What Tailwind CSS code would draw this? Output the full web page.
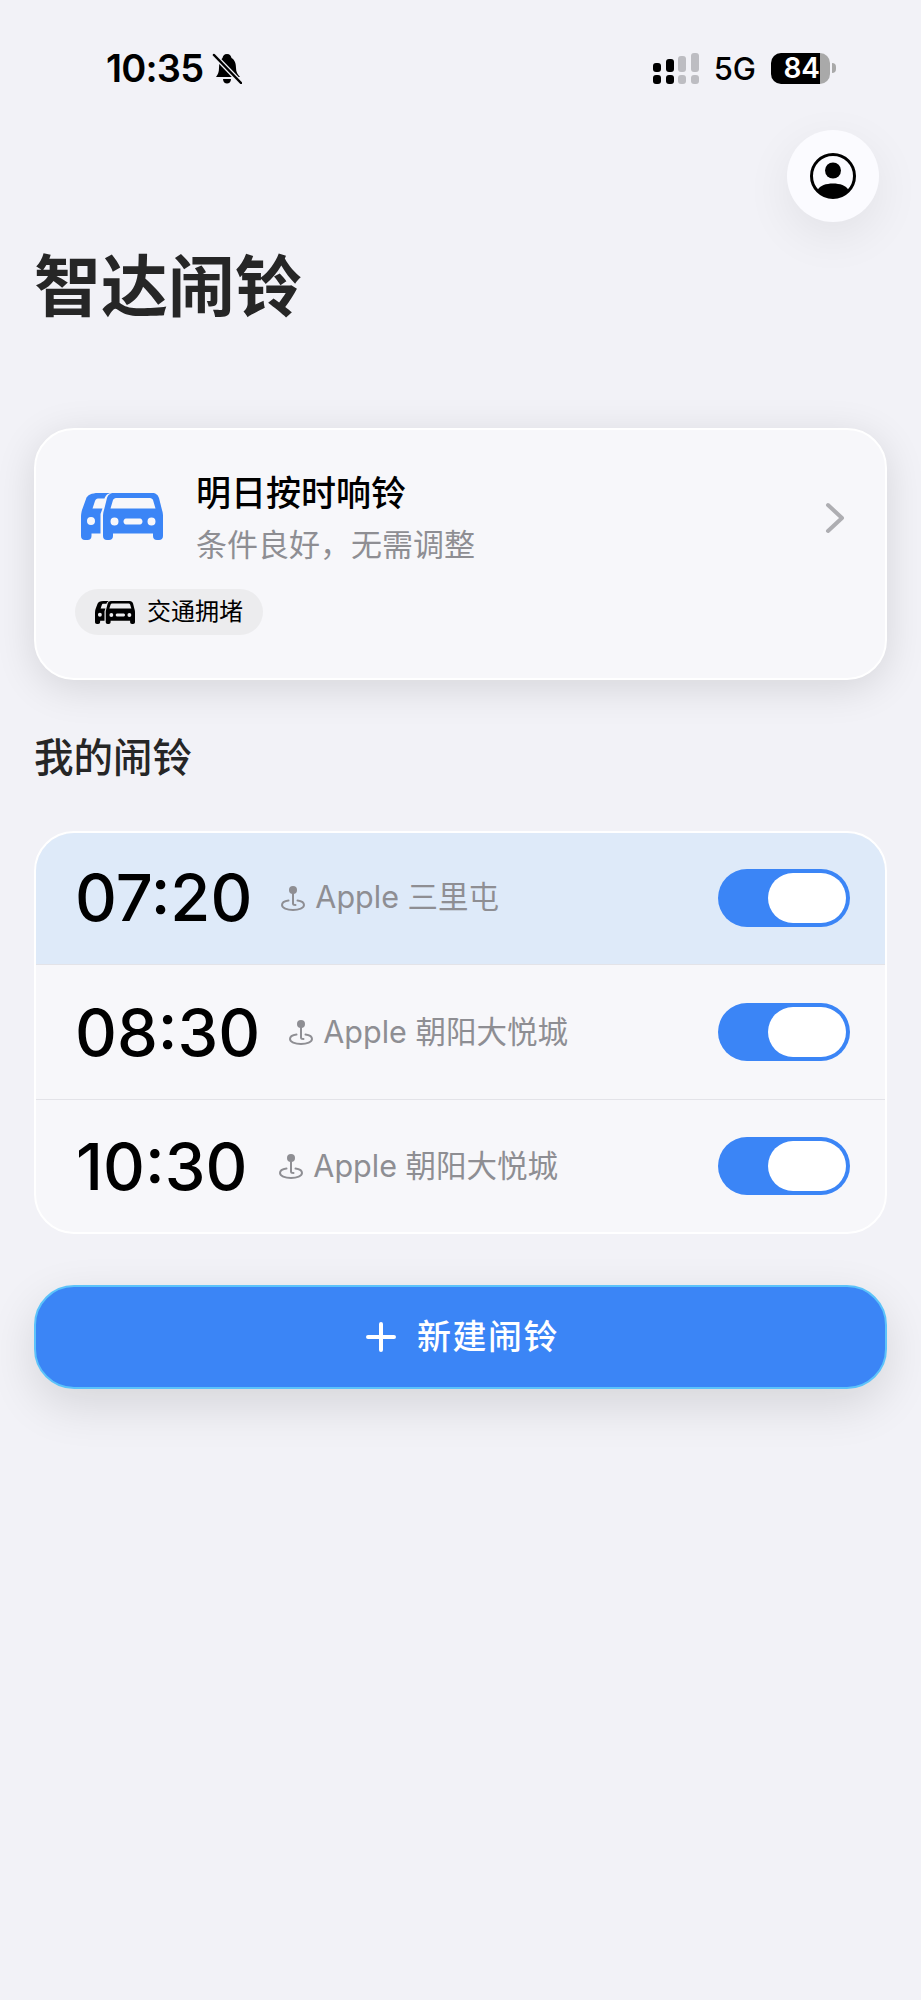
<!DOCTYPE html>
<html lang="zh-CN">
<head>
  <meta charset="UTF-8" />
  <meta name="viewport" content="width=device-width, initial-scale=1.0" />
  <title>智达闹铃</title>
  <script src="https://cdn.jsdelivr.net/npm/@tailwindcss/browser@4"></script>
</head>
<body class="min-h-[2000px] bg-[#f2f2f7] font-['Inter','Noto_Sans_CJK_SC',sans-serif] text-black overflow-x-hidden">

  <svg width="0" height="0" class="absolute">
    <symbol id="cars" viewBox="0 0 82 47">
      <path fill="currentColor" fill-rule="evenodd" d="M33 0H71C75 0 77 2 78 5L81 17C82 20 82 22 82 24V43C82 45.5 80.5 47 78 47H76C73.5 47 72 45.5 72 43V40.5H32V43C32 45.5 30.5 47 28 47H26C23.5 47 22 45.5 22 43V24C22 22 22 20 23 17L26 5C27 2 29 0 33 0ZM35 5C33.5 5 32.5 6 32 7L29.500 15.500H74.500L72 7C71.500 6 70.500 5 69 5ZM33.500 24.500A4 4 0 1 0 33.510 32.500A4 4 0 1 0 33.500 24.500ZM70.500 24.500A4 4 0 1 0 70.510 32.500A4 4 0 1 0 70.500 24.500ZM45 25.500C43.500 25.500 42.500 27 42.500 28.500C42.500 30 43.500 31.500 45 31.500H59C60.500 31.500 61.500 30 61.500 28.500C61.500 27 60.500 25.500 59 25.500Z"/>
      <path fill="currentColor" fill-rule="evenodd" d="M17 0H30C26 .5 24.500 3 23.500 5.500H17C15.500 5.500 14.500 6.500 14 8L11.500 15.500H21.500L19.500 21V40.500H10.500V43C10.500 45.500 9 47 6.500 47H4C1.500 47 0 45.500 0 43V24C0 21 .5 19 1 17L5 6C6 2 11 0 17 0ZM10 24A4 4 0 1 0 10.010 32A4 4 0 1 0 10 24Z"/>
    </symbol>
    <symbol id="pin" viewBox="0 0 24 26">
      <circle cx="12" cy="5" r="4" fill="currentColor"/>
      <path fill="none" stroke="currentColor" stroke-width="2" stroke-linecap="round" d="M12 8V18.500C12 19.500 13 20 14.500 20M7.500 15.500C3.500 16 1 17.500 1 20C1 23 6 25 12 25C18 25 23 23 23 20C23 17.500 20.500 16 16.500 15.500"/>
    </symbol>
  </svg>

  <!-- status bar -->
  <div class="flex items-center justify-between h-[130px] pl-[106px] pr-[85px]">
    <div class="flex items-center gap-[9px] mt-[6px]">
      <span class="text-[38px] leading-none font-semibold tracking-[-0.8px]">10:35</span>
      <svg class="w-[30px] h-[31px]" viewBox="0 0 30 31">
        <path fill="#000" d="M15 1C18 1 19 3 19.500 5C23 7 24 11 24 15C24 19 25.500 21 28 24H4C6 21.500 7 19 7 15C7 11 8 7 10.500 5C11 3 12 1 15 1ZM11 26H19C19 29 17 30.500 15 30.500C13 30.500 11 29 11 26Z"/>
        <path stroke="#f2f2f7" stroke-width="5" d="M1 1L29 30"/>
        <path stroke="#000" stroke-width="2.500" stroke-linecap="round" d="M2 2L29 30"/>
      </svg>
    </div>
    <div class="flex items-center mt-[6px]">
      <div class="flex items-end gap-[4.500px] mr-[15px]">
        <div class="flex flex-col gap-[3px]"><div class="w-[8px] h-[9px] rounded-[3px] bg-black"></div><div class="w-[8px] h-[9px] rounded-[3px] bg-black"></div></div>
        <div class="flex flex-col gap-[3px]"><div class="w-[8px] h-[13px] rounded-[3px] bg-black"></div><div class="w-[8px] h-[9px] rounded-[3px] bg-black"></div></div>
        <div class="flex flex-col gap-[3px]"><div class="w-[8px] h-[16px] rounded-[3px] bg-[#bdbdc2]"></div><div class="w-[8px] h-[9px] rounded-[3px] bg-[#bdbdc2]"></div></div>
        <div class="flex flex-col gap-[3px]"><div class="w-[8px] h-[19px] rounded-[3px] bg-[#bdbdc2]"></div><div class="w-[8px] h-[9px] rounded-[3px] bg-[#bdbdc2]"></div></div>
      </div>
      <span class="text-[31px] leading-none font-medium mr-[15px]">5G</span>
      <div class="flex items-center">
        <div class="flex h-[31px] w-[59px]">
          <div class="flex items-center justify-end w-[49px] rounded-l-[10px] bg-black text-white text-[28px] leading-none font-semibold whitespace-nowrap">84</div>
          <div class="w-[10px] rounded-r-[10px] bg-[#a9a9a9]"></div>
        </div>
        <div class="w-[4px] h-[10px] ml-[2px] rounded-r-full bg-[#a9a9a9]"></div>
      </div>
    </div>
  </div>

  <!-- avatar -->
  <div class="flex justify-end pr-[42px]">
    <button class="flex items-center justify-center w-[92px] h-[92px] rounded-full bg-[#fbfbff] shadow-[0_14px_48px_rgba(0,0,0,0.07)]">
      <svg class="w-[46px] h-[46px]" viewBox="0 0 46 46">
        <circle cx="23" cy="23" r="21.500" fill="none" stroke="#000" stroke-width="3"/>
        <circle cx="23" cy="17.500" r="8" fill="#000"/>
        <path fill="#000" d="M7.500 37C10 32.500 16 30.500 23 30.500C30 30.500 36 32.500 38.500 37C34.500 41.500 29 44 23 44C17 44 11.500 41.500 7.500 37Z"/>
      </svg>
    </button>
  </div>

  <div class="px-[34px]">
    <h1 class="mt-[15px] text-[67px] leading-[100px] font-bold text-[#262626]">智达闹铃</h1>

    <!-- tomorrow card -->
    <div class="mt-[91px] h-[252px] rounded-[40px] border-2 border-white bg-[#f7f7fa] shadow-[0_8px_40px_rgba(0,0,0,0.12)] pl-[39px] pr-[40px] pt-[41px]">
      <div class="flex items-center">
        <svg class="w-[82px] h-[47px] ml-[6px] mr-[33px] mb-[3px] text-[#3b85f6]"><use href="#cars"/></svg>
        <div class="flex-1">
          <div class="text-[35px] leading-[44px] font-medium">明日按时响铃</div>
          <div class="mt-[10px] text-[31px] leading-[40px] text-[#8e8e93]">条件良好，无需调整</div>
        </div>
        <svg class="w-[20px] h-[32px]" viewBox="0 0 20 32"><path fill="none" stroke="#aeaeb2" stroke-width="4" stroke-linecap="round" stroke-linejoin="round" d="M3 3L17 16L3 29"/></svg>
      </div>
      <div class="mt-[24px] inline-flex items-center gap-[12px] h-[46px] px-[20px] rounded-full bg-[#ececee]">
        <svg class="w-[40px] h-[23px] text-black"><use href="#cars"/></svg>
        <span class="text-[24px] leading-none">交通拥堵</span>
      </div>
    </div>

    <h2 class="mt-[50px] text-[39.500px] leading-[56px] font-medium text-[#262626]">我的闹铃</h2>

    <!-- alarms -->
    <div class="mt-[45px] rounded-[40px] border-2 border-white overflow-hidden bg-[#f7f7fa]">
      <div class="flex items-center h-[132px] bg-[#deeaf9] border-b border-[#e3e3e8] pl-[39px] pr-[35px] pb-[2px]">
        <span class="text-[65px] leading-none font-medium">07:20</span>
        <svg class="ml-[29px] w-[24px] h-[26px] text-[#8e8e93]"><use href="#pin"/></svg>
        <span class="ml-[10px] text-[30.500px] leading-none text-[#8e8e93]">Apple 三里屯</span>
        <div class="ml-auto flex justify-end items-center w-[132px] h-[58px] rounded-full bg-[#3b85f6] pr-[4px]"><div class="w-[78px] h-[50px] rounded-full bg-white"></div></div>
      </div>
      <div class="flex items-center h-[135px] border-b border-[#e3e3e8] pl-[39px] pr-[35px]">
        <span class="text-[65px] leading-none font-medium">08:30</span>
        <svg class="ml-[29px] w-[24px] h-[26px] text-[#8e8e93]"><use href="#pin"/></svg>
        <span class="ml-[10px] text-[30.500px] leading-none text-[#8e8e93]">Apple 朝阳大悦城</span>
        <div class="ml-auto flex justify-end items-center w-[132px] h-[58px] rounded-full bg-[#3b85f6] pr-[4px]"><div class="w-[78px] h-[50px] rounded-full bg-white"></div></div>
      </div>
      <div class="flex items-center h-[132px] pl-[40px] pr-[35px]">
        <span class="text-[65px] leading-none font-medium">10:30</span>
        <svg class="ml-[32px] w-[24px] h-[26px] text-[#8e8e93]"><use href="#pin"/></svg>
        <span class="ml-[10px] text-[30.500px] leading-none text-[#8e8e93]">Apple 朝阳大悦城</span>
        <div class="ml-auto flex justify-end items-center w-[132px] h-[58px] rounded-full bg-[#3b85f6] pr-[4px]"><div class="w-[78px] h-[50px] rounded-full bg-white"></div></div>
      </div>
    </div>

    <!-- new alarm -->
    <button class="mt-[51px] flex items-center justify-center gap-[21px] w-full h-[104px] pl-[4px] rounded-[40px] border-2 border-[#5cc3fa] bg-[#3b85f6] text-white shadow-[0_16px_48px_rgba(0,0,0,0.12)]">
      <svg class="w-[30px] h-[30px]" viewBox="0 0 30 30"><path fill="none" stroke="#fff" stroke-width="4" stroke-linecap="round" d="M15 2V28M2 15H28"/></svg>
      <span class="text-[34px] leading-none font-medium tracking-[1.500px]">新建闹铃</span>
    </button>
  </div>

</body>
</html>
